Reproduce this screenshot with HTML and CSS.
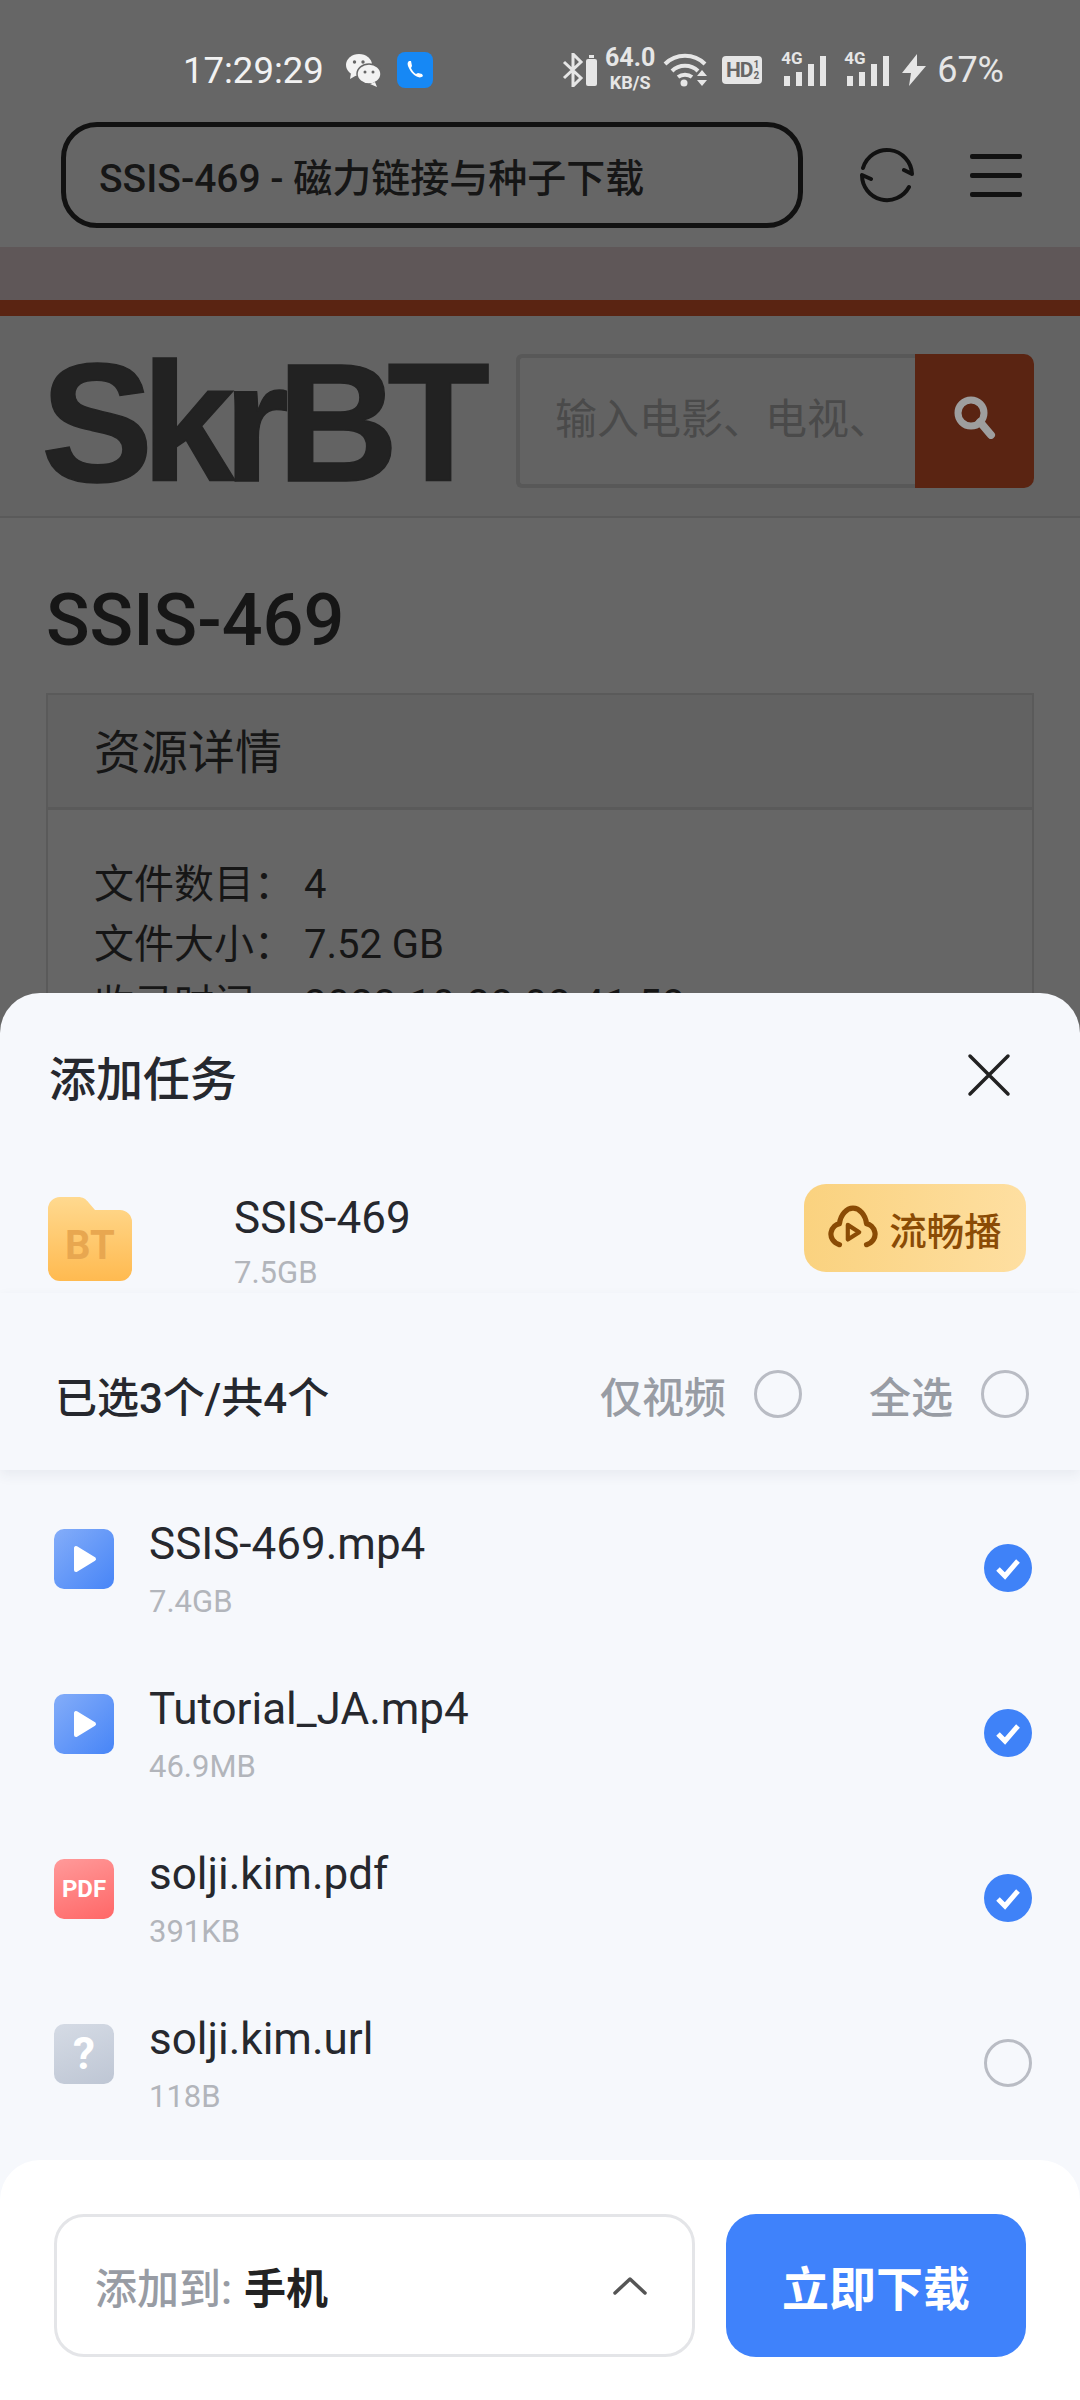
FILE: index.html
```html
<!DOCTYPE html>
<html lang="zh-CN">
<head>
    <meta charset="UTF-8">
    <title>SSIS-469 - 磁力链接与种子下载</title>
    <link rel="stylesheet" href="styles.css">
</head>
<body>
    <div class="status">
        <span class="time">17:29:29</span>
        <svg class="ic-wechat" viewBox="0 0 36 34"><ellipse cx="14" cy="12" rx="13" ry="11" fill="#f2f2f2"/><path d="M6 20l-1 6 7-4z" fill="#f2f2f2"/><ellipse cx="24" cy="21" rx="12" ry="10" fill="#f2f2f2" stroke="#666" stroke-width="1.5"/><path d="M30 29l2 5-7-3z" fill="#f2f2f2"/><circle cx="9.500" cy="9" r="1.700" fill="#666"/><circle cx="18" cy="9" r="1.700" fill="#666"/><circle cx="20" cy="19" r="1.500" fill="#666"/><circle cx="28" cy="19" r="1.500" fill="#666"/></svg>
        <span class="ic-phone"><svg viewBox="0 0 36 36"><path d="M12 9c-1 1-2 2-1 5 2 5 5 9 10 11 2 1 4 0 5-1l-1-2-4-1-2 1c-2-1-4-4-5-6l1-2-1-5z" fill="#fff"/></svg></span>
        <div class="status-right">
            <svg class="ic-bt" viewBox="0 0 36 34"><path d="M2 9l17 16-8 8V1l8 8L2 25" fill="none" stroke="#e6e6e6" stroke-width="3"/><rect x="24" y="6" width="11" height="27" rx="2" fill="#e6e6e6"/><rect x="27" y="2" width="5" height="3" fill="#e6e6e6"/></svg>
            <div class="speed"><b>64.0</b><b class="unit">KB/S</b></div>
            <svg class="ic-wifi" viewBox="0 0 46 34"><g fill="none" stroke="#e6e6e6" stroke-width="4"><path d="M2 11c11-11 29-11 40 0"/><path d="M9 18c7-7 19-7 26 0"/><path d="M15 24c4-3 10-3 14 0"/></g><circle cx="21" cy="30" r="3.500" fill="#e6e6e6"/><path d="M34 23l5-6 5 6zM34 27l5 6 5-6z" fill="#e6e6e6"/></svg>
            <span class="hd">HD<span class="hd-sub">1<br>2</span></span>
            <div class="signal"><span class="sig-4g">4G</span><i class="b1"></i><i class="b2"></i><i class="b3"></i><i class="b4"></i></div>
            <div class="signal"><span class="sig-4g">4G</span><i class="b1"></i><i class="b2"></i><i class="b3"></i><i class="b4"></i></div>
            <svg class="ic-bolt" viewBox="0 0 24 32"><path d="M15 0L0 19h9L7 32l17-20h-9z" fill="#e6e6e6"/></svg>
            <span class="batt">67%</span>
        </div>
    </div>

    <div class="urlrow">
        <div class="urlbar">SSIS-469 - 磁力链接与种子下载</div>
        <svg class="ic-refresh" viewBox="0 0 56 56"><g fill="none" stroke="#111" stroke-width="4" stroke-linecap="round" stroke-linejoin="round"><path d="M3 21A25 25 0 0 1 52 27l-8-4"/><path d="M11 32l-9-4A25 25 0 0 0 49 40"/></g></svg>
        <div class="burger"><i></i><i></i><i></i></div>
    </div>

    <div class="band"></div>

    <div class="site-head">
        <div class="logo">SkrBT</div>
        <div class="search">
            <div class="search-input">输入电影、电视、</div>
            <div class="search-btn"><svg viewBox="0 0 44 44"><circle cx="18" cy="18" r="13" fill="none" stroke="#9e9e9e" stroke-width="7"/><path d="M27 27l11 13" stroke="#9e9e9e" stroke-width="8" stroke-linecap="round"/></svg></div>
        </div>
    </div>

    <div class="content">
        <h1>SSIS-469</h1>
        <div class="panel">
            <div class="panel-head">资源详情</div>
            <div class="panel-body">
                <p>文件数目：&nbsp;4</p>
                <p>文件大小：&nbsp;7.52 GB</p>
                <p>收录时间：&nbsp;<span class="date">2023-10-28 08:41:58</span></p>
            </div>
        </div>
    </div>

    <div class="sheet">
        <div class="sheet-head">
            <span>添加任务</span>
            <svg class="ic-close" viewBox="0 0 44 44"><path d="M3 3l38 38M41 3L3 41" stroke="#222" stroke-width="3.500" stroke-linecap="round"/></svg>
        </div>

        <div class="torrent">
            <div class="folder">
                <svg viewBox="0 0 84 84"><defs><linearGradient id="fold" x1="0" y1="0" x2="0" y2="1"><stop offset="0" stop-color="#ffd98f"/><stop offset="1" stop-color="#ffba50"/></linearGradient></defs><path d="M0 12A12 12 0 0 1 12 0h18c5 0 8 2 11 6l6 7h25a12 12 0 0 1 12 12v47a12 12 0 0 1-12 12H12A12 12 0 0 1 0 72z" fill="url(#fold)"/></svg>
                <span>BT</span>
            </div>
            <div class="torrent-text">
                <div class="name">SSIS-469</div>
                <div class="size">7.5GB</div>
            </div>
            <div class="play-btn">
                <svg viewBox="0 0 48 44"><g fill="none" stroke="#8a4b05" stroke-width="5" stroke-linecap="round" stroke-linejoin="round"><path d="M11 38C5 36 2 31 3 26c1-5 5-8 8-8C12 9 18 3 24 3s12 6 13 15c3 0 7 3 8 8 1 5-2 10-8 12"/></g><path d="M19 19l11 7-11 7z" fill="none" stroke="#8a4b05" stroke-width="4" stroke-linejoin="round"/></svg>
                <span>流畅播</span>
            </div>
        </div>

        <div class="selbar">
            <span class="sel-count">已选3个/共4个</span>
            <span class="sel-opt">仅视频</span>
            <i class="radio"></i>
            <span class="sel-opt sel-all">全选</span>
            <i class="radio"></i>
        </div>

        <div class="files">
            <div class="file">
                <div class="ftype video"><svg viewBox="0 0 60 60"><path d="M22 19v22l18-11z" fill="#fff" stroke="#fff" stroke-width="4" stroke-linejoin="round"/></svg></div>
                <div class="file-text"><div class="file-name">SSIS-469.mp4</div><div class="size">7.4GB</div></div>
                <i class="check"><svg viewBox="0 0 48 48"><path d="M14 25l7 7 13-15" fill="none" stroke="#fff" stroke-width="5"/></svg></i>
            </div>
            <div class="file">
                <div class="ftype video"><svg viewBox="0 0 60 60"><path d="M22 19v22l18-11z" fill="#fff" stroke="#fff" stroke-width="4" stroke-linejoin="round"/></svg></div>
                <div class="file-text"><div class="file-name">Tutorial_JA.mp4</div><div class="size">46.9MB</div></div>
                <i class="check"><svg viewBox="0 0 48 48"><path d="M14 25l7 7 13-15" fill="none" stroke="#fff" stroke-width="5"/></svg></i>
            </div>
            <div class="file">
                <div class="ftype pdf">PDF</div>
                <div class="file-text"><div class="file-name">solji.kim.pdf</div><div class="size">391KB</div></div>
                <i class="check"><svg viewBox="0 0 48 48"><path d="M14 25l7 7 13-15" fill="none" stroke="#fff" stroke-width="5"/></svg></i>
            </div>
            <div class="file">
                <div class="ftype unknown">?</div>
                <div class="file-text"><div class="file-name">solji.kim.url</div><div class="size">118B</div></div>
                <i class="radio"></i>
            </div>
        </div>

        <div class="sheet-foot">
            <div class="target">
                <span class="target-label">添加到:</span>
                <b>手机</b>
                <svg viewBox="0 0 34 20"><path d="M2 17L17 3l15 14" fill="none" stroke="#555" stroke-width="3.500" stroke-linecap="round" stroke-linejoin="round"/></svg>
            </div>
            <div class="download">立即下载</div>
        </div>
    </div>
</body>
</html>
```
FILE: styles.css
```css
* {
    margin: 0;
    padding: 0;
    box-sizing: border-box;
}
body {
    width: 1080px;
    height: 2400px;
    overflow: hidden;
    position: relative;
    background: #666;
    color: #161616;
    font-family: Roboto, "Noto Sans CJK SC", sans-serif;
}

/* status bar */
.status {
    height: 122px;
    padding: 18px 76px 0 183px;
    display: flex;
    align-items: center;
    color: #f2f2f2;
}
.time {
    font-size: 36.500px;
    width: 162px;
}
.ic-wechat {
    width: 36px;
    height: 34px;
}
.ic-phone {
    width: 36px;
    height: 36px;
    margin-left: 16px;
    border-radius: 8px;
    background: #1688f5;
}
.ic-phone svg {
    display: block;
}
.status-right {
    margin-left: auto;
    display: flex;
    align-items: center;
    color: #e6e6e6;
}
.ic-bt {
    width: 36px;
    height: 34px;
}
.speed {
    width: 50px;
    margin: 0 8px 0 7px;
    padding-bottom: 4px;
    display: flex;
    flex-direction: column;
    align-items: center;
    font-size: 25px;
}
.speed .unit {
    font-size: 18px;
}
.ic-wifi {
    width: 46px;
    height: 34px;
}
.hd {
    width: 40px;
    height: 28px;
    margin: 0 19px 0 13px;
    border-radius: 4px;
    background: #e6e6e6;
    color: #666;
    font-size: 21px;
    font-weight: 700;
    display: flex;
    align-items: center;
    justify-content: center;
    letter-spacing: -1px;
}
.hd-sub {
    font-size: 10px;
    line-height: 11px;
    margin-left: 1px;
}
.signal {
    width: 47px;
    height: 32px;
    margin-right: 16px;
    display: flex;
    align-items: flex-end;
    gap: 6px;
    position: relative;
}
.signal:last-of-type {
    margin-right: 11px;
}
.signal i {
    width: 6px;
    background: #e6e6e6;
}
.signal .b1 {
    height: 10px;
    margin-left: 3px;
}
.signal .b2 {
    height: 14px;
}
.signal .b3 {
    height: 22px;
}
.signal .b4 {
    height: 30px;
}
.sig-4g {
    position: absolute;
    left: 0;
    top: -4px;
    font-size: 17px;
    font-weight: 700;
    line-height: 17px;
}
.ic-bolt {
    width: 24px;
    height: 32px;
}
.batt {
    font-size: 36px;
    margin-left: 11px;
}

/* browser bar */
.urlrow {
    height: 125px;
    padding: 0 58px 19px 61px;
    display: flex;
    align-items: center;
}
.urlbar {
    width: 742px;
    height: 106px;
    padding-left: 33px;
    border: 5px solid #111;
    border-radius: 36px;
    display: flex;
    align-items: center;
    font-size: 39px;
    font-weight: 500;
}
.ic-refresh {
    width: 56px;
    height: 56px;
    margin-left: 57px;
}
.burger {
    width: 52px;
    margin-left: 54px;
    display: flex;
    flex-direction: column;
    gap: 14px;
}
.burger i {
    height: 5px;
    border-radius: 2px;
    background: #111;
}
.band {
    height: 69px;
    background: #5f5758;
    border-bottom: 16px solid #5a2412;
}

/* site header */
.site-head {
    height: 202px;
    padding: 38px 46px 0 41px;
    border-bottom: 2px solid #5a5a5a;
    display: flex;
    background: #636363;
}
.logo {
    width: 475px;
    font-family: "Liberation Sans", sans-serif;
    font-size: 168px;
    font-weight: 700;
    line-height: 138px;
    letter-spacing: -11.500px;
    color: #222;
    -webkit-text-stroke: 1.500px #222;
}
.search {
    height: 134px;
    display: flex;
    flex: 1;
}
.search-input {
    flex: 1;
    border: 4px solid #585858;
    border-right: 0;
    border-radius: 6px 0 0 6px;
    padding: 0 0 12px 35px;
    display: flex;
    align-items: center;
    font-size: 42px;
    color: #4a4a4a;
    overflow: hidden;
    white-space: nowrap;
}
.search-btn {
    width: 119px;
    padding-bottom: 8px;
    background: #5a2412;
    border-radius: 0 10px 10px 0;
    display: flex;
    align-items: center;
    justify-content: center;
}
.search-btn svg {
    width: 44px;
    height: 44px;
}

/* page behind the sheet */
.content {
    padding: 0 46px 0 46px;
}
h1 {
    height: 175px;
    padding-top: 48px;
    font-size: 72px;
    font-weight: 500;
    line-height: 110px;
}
.panel {
    border: 2px solid #5a5a5a;
}
.panel-head {
    height: 115px;
    padding: 0 0 6px 46px;
    background: #626262;
    border-bottom: 3px solid #5a5a5a;
    display: flex;
    align-items: center;
    font-size: 47px;
}
.panel-body {
    padding: 45px 46px;
    font-size: 40px;
    line-height: 60px;
}
.date {
    letter-spacing: 0.800px;
}

/* bottom sheet */
.sheet {
    position: absolute;
    left: 0;
    right: 0;
    top: 993px;
    bottom: 0;
    display: flex;
    flex-direction: column;
    background: #f6f8fc;
    border-radius: 40px 40px 0 0;
    color: #26282e;
}
.sheet-head {
    height: 170px;
    flex: none;
    padding: 0 69px 6px 49px;
    display: flex;
    align-items: center;
    justify-content: space-between;
    font-size: 47px;
    font-weight: 500;
}
.ic-close {
    width: 44px;
    height: 44px;
}
.torrent {
    height: 130px;
    flex: none;
    padding: 0 54px 0 48px;
    display: flex;
    align-items: center;
}
.folder {
    width: 84px;
    height: 84px;
    margin-top: 22px;
    position: relative;
}
.folder svg {
    display: block;
}
.folder span {
    position: absolute;
    left: 0;
    right: 0;
    top: 24px;
    text-align: center;
    font-size: 40px;
    font-weight: 700;
    line-height: 50px;
    color: #e8a750;
}
.torrent-text {
    margin: 28px 0 0 102px;
    flex: 1;
}
.name {
    font-size: 44px;
    line-height: 52px;
}
.size {
    font-size: 31px;
    line-height: 40px;
    color: #b2b5bb;
}
.torrent-text .size {
    margin-top: 9px;
}
.play-btn {
    width: 222px;
    height: 88px;
    border-radius: 22px;
    background: linear-gradient(90deg, #fad27f, #fedfa1);
    display: flex;
    align-items: center;
    justify-content: center;
    gap: 11px;
    font-size: 37.500px;
    font-weight: 500;
    color: #8a4b05;
}
.play-btn svg {
    width: 50px;
    height: 46px;
}
.selbar {
    height: 177px;
    flex: none;
    padding: 25px 51px 0 55px;
    display: flex;
    align-items: center;
    box-shadow: 0 5px 12px rgba(40, 50, 80, 0.07);
    position: relative;
    font-size: 42px;
    font-weight: 500;
}
.sel-count {
    flex: 1;
}
.sel-opt {
    color: #989ca4;
    margin-right: 28px;
}
.sel-all {
    margin-left: 67px;
}
.radio {
    width: 48px;
    height: 48px;
    flex: none;
    border: 3px solid #b9bcc4;
    border-radius: 50%;
}

/* file list */
.files {
    padding: 15px 48px 0 54px;
}
.file {
    height: 165px;
    display: flex;
    align-items: center;
    position: relative;
}
.ftype {
    width: 60px;
    height: 60px;
    align-self: flex-start;
    margin-top: 44px;
    border-radius: 10px;
    color: #fff;
    display: flex;
    align-items: center;
    justify-content: center;
    font-weight: 700;
}
.ftype svg {
    display: block;
}
.video {
    background: linear-gradient(135deg, #84adf9, #4785f7);
}
.pdf {
    background: linear-gradient(160deg, #ff9a9a, #ff6767);
    font-size: 24px;
}
.unknown {
    background: linear-gradient(160deg, #d5dbe5, #bec6d4);
    font-size: 44px;
}
.file-text {
    flex: 1;
    margin-left: 35px;
    align-self: flex-start;
    padding-top: 35px;
}
.file-name {
    font-size: 44px;
    line-height: 48px;
}
.file-text .size {
    margin-top: 14px;
}
.check {
    width: 48px;
    height: 48px;
    flex: none;
    border-radius: 50%;
    background: #3f82f8;
}
.check svg {
    display: block;
}

/* footer */
.sheet-foot {
    margin-top: auto;
    height: 240px;
    padding: 54px 54px 0 54px;
    display: flex;
    gap: 31px;
    background: #fff;
    border-radius: 40px 40px 0 0;
}
.target {
    width: 641px;
    height: 143px;
    padding: 0 45px 0 38px;
    border: 3px solid #e4e5e8;
    border-radius: 30px;
    display: flex;
    align-items: center;
    font-size: 42px;
}
.target-label {
    color: #989ca4;
    font-weight: 500;
    margin-right: 12px;
}
.target b {
    flex: 1;
    color: #222;
    font-weight: 700;
}
.target svg {
    width: 34px;
    height: 20px;
}
.download {
    width: 300px;
    height: 143px;
    border-radius: 30px;
    background: #3f82fb;
    color: #fff;
    display: flex;
    align-items: center;
    justify-content: center;
    font-size: 47px;
    font-weight: 700;
}
```
